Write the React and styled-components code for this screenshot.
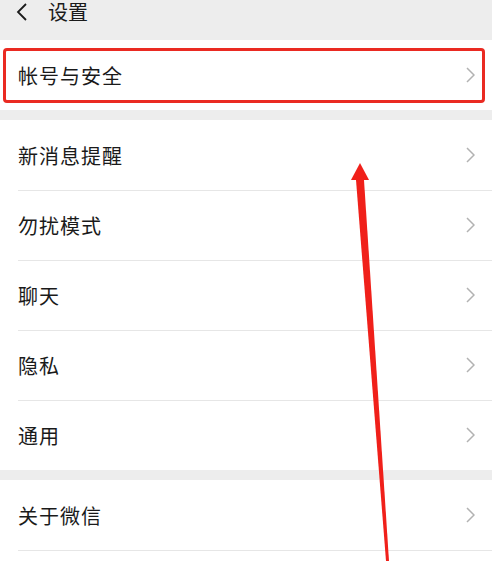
import styled, { createGlobalStyle } from "styled-components";

const GlobalStyle = createGlobalStyle`
  html, body {
    margin: 0;
    padding: 0;
    background: #ededed;
  }
  body {
    font-family: "Noto Sans CJK SC", "Noto Sans", sans-serif;
    color: #1a1a1a;
  }
`;

const Page = styled.div`
  position: relative;
  width: 492px;
  height: 561px;
  overflow: hidden;
  background: #ededed;
`;

const Header = styled.div`
  display: flex;
  align-items: center;
  height: 40px;
  padding-left: 16px;
  box-sizing: border-box;
  padding-bottom: 16px;
  gap: 20px;
  font-size: 20px;
  color: #1a1a1a;
`;

const Title = styled.span`
  line-height: 1;
`;

const Group = styled.div`
  background: #fff;
  margin-bottom: 10px;
`;

const Row = styled.div`
  position: relative;
  display: flex;
  align-items: center;
  justify-content: space-between;
  height: 70px;
  padding: 0 17px 0 18px;
  box-sizing: border-box;
  font-size: 20px;
  color: #1a1a1a;

  & + & {
    &::before {
      content: "";
      position: absolute;
      top: 0;
      left: 18px;
      right: 0;
      border-top: 1px solid #e6e6e6;
    }
  }
`;

const Highlight = styled.div`
  position: absolute;
  left: 3px;
  right: 7px;
  top: 8px;
  bottom: 7px;
  border: 3px solid #ea2a22;
  border-radius: 4px;
  pointer-events: none;
`;

const Label = styled.span`
  letter-spacing: 1px;
`;

const Overlay = styled.svg`
  position: absolute;
  left: 0;
  top: 0;
  pointer-events: none;
`;

function Back() {
  return (
    <svg width="12" height="18" viewBox="0 0 12 18">
      <path d="M10 1 L2 9 L10 17" fill="none" stroke="#1a1a1a" strokeWidth="1.8" />
    </svg>
  );
}

function Chevron() {
  return (
    <svg width="9" height="16" viewBox="0 0 9 16">
      <path d="M1 1 L8 8 L1 15" fill="none" stroke="#b2b2b2" strokeWidth="1.5" />
    </svg>
  );
}

const groups = [
  ["帐号与安全"],
  ["新消息提醒", "勿扰模式", "聊天", "隐私", "通用"],
  ["关于微信", "帮助与反馈"],
];

export default function App() {
  return (
    <Page>
      <GlobalStyle />
      <Header>
        <Back />
        <Title>设置</Title>
      </Header>
      {groups.map((items, gi) => (
        <Group key={gi}>
          {items.map((label) => (
            <Row key={label}>
              <Label>{label}</Label>
              <Chevron />
              {label === "帐号与安全" && <Highlight />}
            </Row>
          ))}
        </Group>
      ))}
      <Overlay width="492" height="561" viewBox="0 0 492 561">
        <polygon points="356,180 364,180 389,561 386,561" fill="#f0201a" />
        <polygon points="360,163 369,180 351,180" fill="#f0201a" />
      </Overlay>
    </Page>
  );
}
